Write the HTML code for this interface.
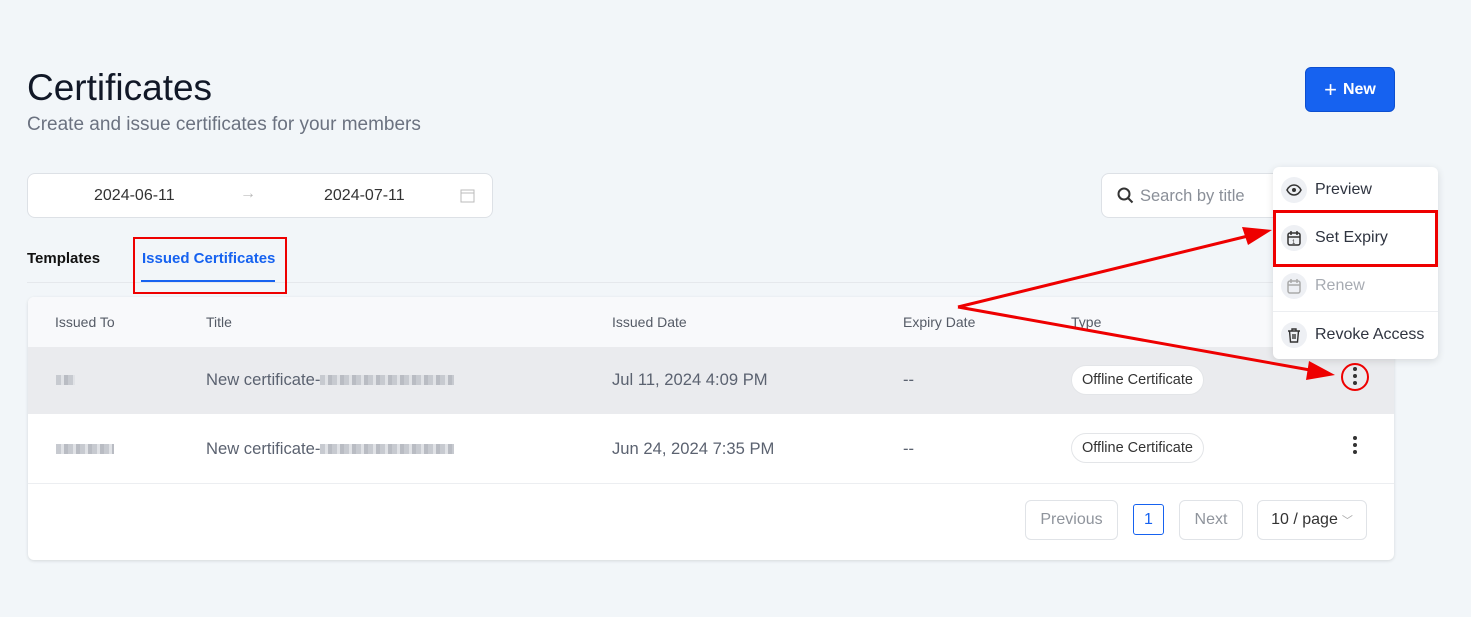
<!DOCTYPE html>
<html><head><style>
*{box-sizing:border-box;margin:0;padding:0}
body{width:1471px;height:617px;background:#f2f6f9;font-family:"Liberation Sans",sans-serif;position:relative;overflow:hidden;color:#1f2328}
.abs{position:absolute}
h1{position:absolute;left:27px;top:67px;font-size:37px;font-weight:400;color:#111827}
.sub{left:27px;top:114px;font-size:19px;color:#6b7280}
.new{left:1305px;top:67px;width:90px;height:45px;background:#1662f0;border-radius:6px;color:#fff;font-weight:bold;font-size:16px;display:flex;align-items:center;justify-content:center;gap:6px;border:1px solid #0d4fd0}
.date{left:27px;top:173px;width:466px;height:45px;background:#fff;border:1px solid #dde1e6;border-radius:8px;font-size:16px;color:#333}
.search{left:1101px;top:173px;width:200px;height:45px;background:#fff;border:1px solid #dde1e6;border-radius:8px;font-size:17px;color:#8a8f98}
.card{left:28px;top:297px;width:1366px;height:263px;background:#fff;border-radius:6px;box-shadow:0 1px 3px rgba(0,0,0,.12);overflow:hidden}
.th{font-size:14px;color:#555b66;top:17px}
.td{font-size:16.6px;color:#5b6270}
.blur{display:inline-block;height:10px;background:repeating-linear-gradient(90deg,#c7cad0 0 5px,#e0e2e6 5px 8px,#b9bcc3 8px 12px)}
.pill{border:1px solid #e3e5e8;border-radius:15px;background:#fff;font-size:14.5px;color:#333;padding:6px 10px}
.btn{border:1px solid #e0e3e7;border-radius:6px;background:#fff;font-size:16px;color:#8f949c;display:flex;align-items:center;justify-content:center}
.menu{left:1273px;top:167px;width:165px;height:192px;background:#fff;border-radius:6px;box-shadow:0 2px 8px rgba(0,0,0,.12)}
.mi{position:absolute;left:8px;display:flex;align-items:center;gap:8px;font-size:16px;color:#2f3440}
.ic{width:26px;height:26px;border-radius:50%;background:#eef0f4;display:flex;align-items:center;justify-content:center}
.dots{position:absolute;width:4px}
.dots i{display:block;width:4px;height:4px;border-radius:50%;background:#333;margin-bottom:3px}
</style></head><body>
<h1>Certificates</h1>
<div class="abs sub">Create and issue certificates for your members</div>
<div class="abs new"><span style="font-size:22px;font-weight:300">+</span>New</div>
<div class="abs date"><span class="abs" style="left:66px;top:13px">2024-06-11</span><span class="abs" style="left:212px;top:11px;color:#bbb">→</span><span class="abs" style="left:296px;top:13px">2024-07-11</span>
<svg class="abs" style="left:432px;top:14px" width="15" height="15" viewBox="0 0 15 15"><rect x="1" y="2" width="13" height="12" fill="none" stroke="#bbb"/><line x1="1" y1="5" x2="14" y2="5" stroke="#bbb"/></svg></div>
<div class="abs search"><svg class="abs" style="left:15px;top:13px" width="17" height="17" viewBox="0 0 17 17"><circle cx="7" cy="7" r="5.5" fill="none" stroke="#333" stroke-width="2"/><line x1="11" y1="11" x2="15.5" y2="15.5" stroke="#333" stroke-width="2"/></svg><span class="abs" style="left:38px;top:13px;font-size:16.5px">Search by title</span></div>
<div class="abs" style="left:27px;top:250px;font-size:15px;font-weight:bold;color:#111">Templates</div>
<div class="abs" style="left:142px;top:250px;font-size:15px;font-weight:bold;color:#1662f0">Issued Certificates</div>
<div class="abs" style="left:141px;top:280px;width:134px;height:2px;background:#1662f0"></div>
<div class="abs" style="left:27px;top:282px;width:1368px;height:1px;background:#e5e8ec"></div>
<div class="abs" style="left:133px;top:237px;width:154px;height:57px;border:2px solid #e00"></div>
<div class="abs card">
<div class="abs" style="left:0;top:0;width:1366px;height:50px;background:#f8f9fb"></div>
<div class="abs th" style="left:27px">Issued To</div><div class="abs th" style="left:178px">Title</div><div class="abs th" style="left:584px">Issued Date</div><div class="abs th" style="left:875px">Expiry Date</div><div class="abs th" style="left:1043px">Type</div>
<div class="abs" style="left:0;top:50px;width:1366px;height:67px;background:#eaebee"></div>
<span class="abs blur" style="left:28px;top:78px;width:19px"></span>
<div class="abs td" style="left:178px;top:73px">New certificate-<span class="blur" style="width:134px"></span></div>
<div class="abs td" style="left:584px;top:73px">Jul 11, 2024 4:09 PM</div>
<div class="abs td" style="left:875px;top:73px">--</div>
<div class="abs pill" style="left:1043px;top:68px">Offline Certificate</div>
<div class="abs" style="left:0;top:186px;width:1366px;height:1px;background:#eceef1"></div>
<span class="abs blur" style="left:28px;top:147px;width:58px"></span>
<div class="abs td" style="left:178px;top:142px">New certificate-<span class="blur" style="width:134px"></span></div>
<div class="abs td" style="left:584px;top:142px">Jun 24, 2024 7:35 PM</div>
<div class="abs td" style="left:875px;top:142px">--</div>
<div class="abs pill" style="left:1043px;top:136px">Offline Certificate</div>
<div class="dots" style="left:1325px;top:70px"><i></i><i></i><i></i></div>
<div class="dots" style="left:1325px;top:139px"><i></i><i></i><i></i></div>
<div class="abs btn" style="left:997px;top:203px;width:93px;height:40px">Previous</div>
<div class="abs btn" style="left:1105px;top:207px;width:31px;height:31px;border-color:#1662f0;color:#1662f0;border-radius:3px">1</div>
<div class="abs btn" style="left:1151px;top:203px;width:64px;height:40px">Next</div>
<div class="abs btn" style="left:1229px;top:203px;width:110px;height:40px;color:#333">10 / page <span style="color:#aaa;font-size:11px;margin-left:4px">﹀</span></div>
</div>
<div class="abs menu">
<div class="mi" style="top:10px"><div class="ic"><svg width="16" height="12" viewBox="0 0 16 12"><path d="M1 6C3 2 6 1 8 1s5 1 7 5c-2 4-5 5-7 5S3 10 1 6z" fill="none" stroke="#333" stroke-width="1.5"/><circle cx="8" cy="6" r="2" fill="#333"/></svg></div>Preview</div>
<div class="mi" style="top:58px"><div class="ic"><svg width="14" height="15" viewBox="0 0 14 15"><rect x="1" y="2" width="12" height="12" rx="2" fill="none" stroke="#333" stroke-width="1.5"/><path d="M4 0v4M10 0v4M1 6h12" stroke="#333" stroke-width="1.5"/><text x="5" y="13" font-size="6" fill="#333">1</text></svg></div>Set Expiry</div>
<div class="mi" style="top:106px;color:#a7abb2"><div class="ic"><svg width="14" height="15" viewBox="0 0 14 15"><rect x="1" y="2" width="12" height="12" rx="2" fill="none" stroke="#aaa" stroke-width="1.5"/><path d="M4 0v4M10 0v4M1 6h12" stroke="#aaa" stroke-width="1.5"/></svg></div>Renew</div>
<div class="abs" style="left:0;top:144px;width:165px;height:1px;background:#eceef1"></div>
<div class="mi" style="top:155px"><div class="ic"><svg width="14" height="15" viewBox="0 0 14 15"><path d="M1 3h12M5 3V1h4v2M2.5 3l1 11h7l1-11M6 6v5M8 6v5" fill="none" stroke="#333" stroke-width="1.4"/></svg></div>Revoke Access</div>
</div>
<div class="abs" style="left:1273px;top:210px;width:165px;height:57px;border:3px solid #e00"></div>
<svg class="abs" style="left:0;top:0" width="1471" height="617">
<line x1="958" y1="307" x2="1248" y2="236" stroke="#e00" stroke-width="3"/>
<polygon points="1272,230 1242,227 1248,245" fill="#e00"/>
<line x1="958" y1="307" x2="1310" y2="370" stroke="#e00" stroke-width="3"/>
<polygon points="1335,375 1309,361 1306,380" fill="#e00"/>
<circle cx="1355" cy="377" r="13" fill="none" stroke="#e00" stroke-width="2"/>
</svg>
</body></html>
